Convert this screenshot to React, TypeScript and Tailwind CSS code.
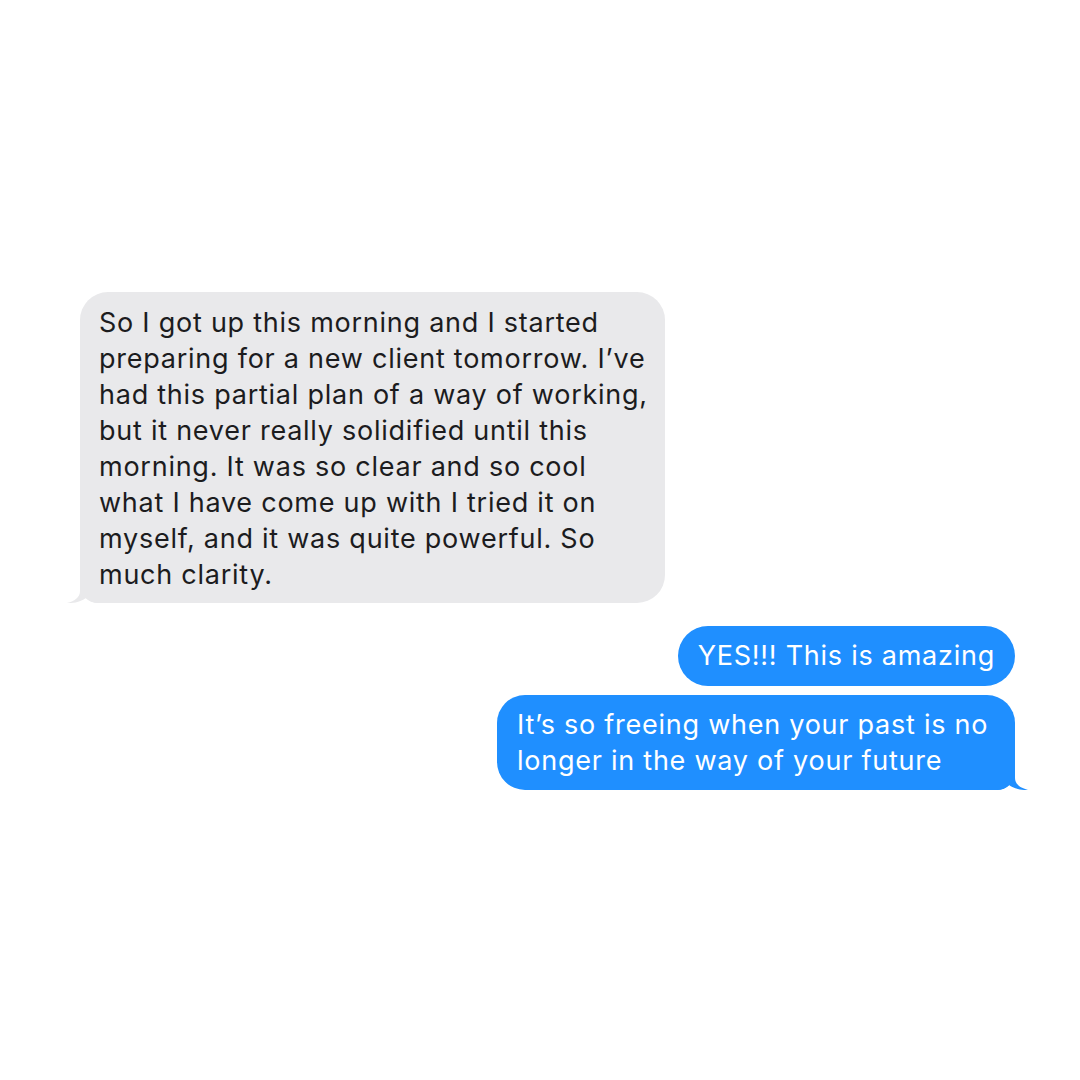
import React from "react";

function LeftTail({ color }: { color: string }) {
  return (
    <svg
      className="absolute bottom-0 left-[-14px]"
      width="34"
      height="28"
      viewBox="0 0 34 28"
    >
      <path
        d="M14 0 L14 16 C14 22 9 26 1 28 C9 28.5 16 26 20 23 C23 26 28 28 34 28 L34 0 Z"
        fill={color}
      />
    </svg>
  );
}

function RightTail({ color }: { color: string }) {
  return (
    <svg
      className="absolute bottom-0 right-[-14px]"
      width="34"
      height="28"
      viewBox="0 0 34 28"
      style={{ transform: "scaleX(-1)" }}
    >
      <path
        d="M14 0 L14 16 C14 22 9 26 1 28 C9 28.5 16 26 20 23 C23 26 28 28 34 28 L34 0 Z"
        fill={color}
      />
    </svg>
  );
}

export default function App() {
  return (
    <div
      className="w-[1080px] h-[1080px] bg-white flex flex-col pt-[292px] pl-[80px] pr-[65px] text-[27px] leading-[36px] tracking-[0.75px]"
      style={{ fontFamily: "Inter, 'Noto Sans', sans-serif" }}
    >
      <div className="relative w-[585px] bg-[#e9e9eb] rounded-[28px] rounded-bl-[18px] pl-[19px] pr-[14px] pt-[13px] pb-[10px] text-[#1c1c1e]">
        So I got up this morning and I started preparing for a new client tomorrow. I’ve had this partial plan of a way of working, but it never really solidified until this morning. It was so clear and so cool what I have come up with I tried it on myself, and it was quite powerful. So much clarity.
        <LeftTail color="#e9e9eb" />
      </div>
      <div className="flex flex-col items-end mt-[23px] gap-[9px]">
        <div className="bg-[#1f8fff] rounded-[30px] pl-[20px] pr-[20px] pt-[12px] pb-[12px] text-white">
          YES!!! This is amazing
        </div>
        <div className="relative w-[518px] bg-[#1f8fff] rounded-[28px] rounded-br-[18px] pl-[20px] pr-[14px] pt-[12px] pb-[11px] text-white">
          It’s so freeing when your past is no longer in the way of your future
          <RightTail color="#1f8fff" />
        </div>
      </div>
    </div>
  );
}
